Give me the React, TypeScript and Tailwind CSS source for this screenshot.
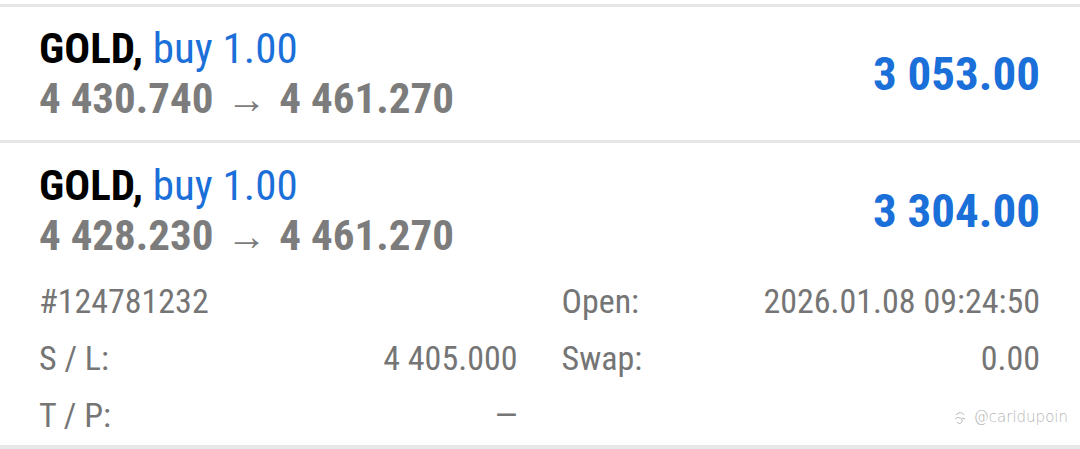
import React from "react";

const font = { fontFamily: '"Roboto Condensed", "Roboto", "Liberation Sans", sans-serif' };

function Head({ open, value }: { open: string; value: string }) {
  return (
    <div className="flex items-center justify-between">
      <div className="flex flex-col">
        <div className="text-[43px] leading-[50px] whitespace-nowrap">
          <span className="font-bold text-black">GOLD,</span>{" "}
          <span className="text-[#1b6fd9]">buy 1.00</span>
        </div>
        <div className="text-[43px] leading-[50px] font-bold text-[#7c7c7c] whitespace-nowrap">
          {open} <span className="font-normal text-[40px] mx-[3px]">→</span> 4 461.270
        </div>
      </div>
      <div className="text-[47px] font-bold text-[#1b6fd9] leading-[56px]">{value}</div>
    </div>
  );
}

export default function App() {
  return (
    <div className="w-[1080px] h-[449px] bg-white overflow-hidden relative" style={font}>
      <div className="pt-[4px]">
        <div className="border-t-[3px] border-b-[3px] border-[#e6e6e6] pl-[39px] pr-[40px] pt-[16px] pb-[15px]">
          <Head open="4 430.740" value="3 053.00" />
        </div>
        <div className="border-b-[6px] border-[#e8e8e8] pl-[39px] pr-[40px] pt-[17px] pb-[1px]">
          <Head open="4 428.230" value="3 304.00" />
          <div className="mt-[11px] grid grid-cols-2 gap-x-[44px] text-[34px] leading-[57px] text-[#757575]">
            <div className="flex justify-between"><span>#124781232</span></div>
            <div className="flex justify-between"><span>Open:</span><span>2026.01.08 09:24:50</span></div>
            <div className="flex justify-between"><span>S / L:</span><span>4 405.000</span></div>
            <div className="flex justify-between"><span>Swap:</span><span>0.00</span></div>
            <div className="flex justify-between"><span>T / P:</span><span>—</span></div>
            <div className="flex justify-end items-center">
              <span className="flex items-center gap-[6px] text-[15px] leading-none text-[#b5b5b5] mr-[-28px] mt-[4px]" style={{ fontFamily: '"DejaVu Sans", sans-serif', fontWeight: 200 }}>
                <svg width="16" height="16" viewBox="0 0 16 16" fill="none" stroke="#b5b5b5" strokeWidth="1">
                  <path d="M4 5 C6 2, 11 2, 12 5 M3 9 C5 7, 9 7, 10 10 C11 13, 7 15, 5 12 M10 8 L13 9" />
                </svg>
                @carldupoin
              </span>
            </div>
          </div>
        </div>
      </div>
    </div>
  );
}
